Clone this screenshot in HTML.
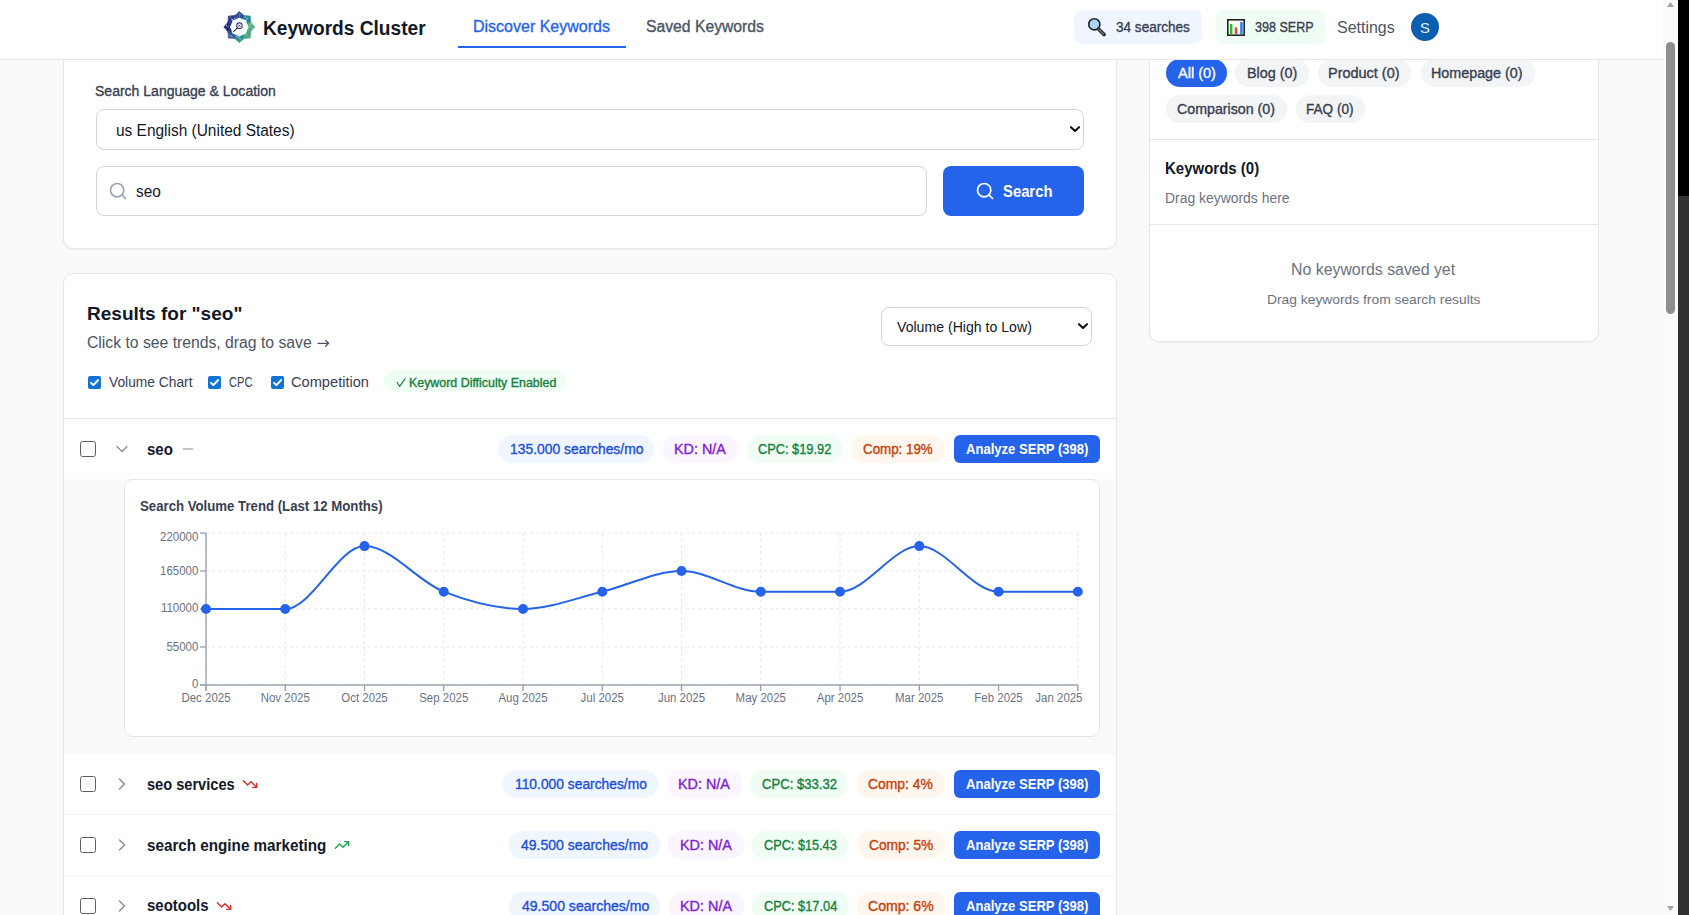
<!DOCTYPE html>
<html><head><meta charset="utf-8"><title>Keywords Cluster</title>
<style>
html,body{margin:0;padding:0}
body{width:1689px;height:915px;overflow:hidden;position:relative;background:#f9fafb;font-family:"Liberation Sans",sans-serif}
.b{position:absolute;display:block}
.t{position:absolute;white-space:nowrap;line-height:1;transform-origin:0 0}
#main{position:absolute;left:0;top:0;width:1663px;height:915px;overflow:hidden}
#hdr{position:absolute;left:0;top:0;width:1663px;height:60px}
</style></head><body>
<div id="main">
<div class="b" style="left:63px;top:-40px;width:1054px;height:289px;background:#fff;border:1px solid #e5e7eb;border-radius:10px;box-shadow:0 1px 2px rgba(0,0,0,.05);box-sizing:border-box"></div>
<div class="b" style="left:1149px;top:-40px;width:450px;height:382px;background:#fff;border:1px solid #e5e7eb;border-radius:10px;box-shadow:0 1px 2px rgba(0,0,0,.05);box-sizing:border-box"></div>
<div class="b" style="left:63px;top:273px;width:1054px;height:727px;background:#fff;border:1px solid #e5e7eb;border-radius:10px;box-shadow:0 1px 2px rgba(0,0,0,.05);box-sizing:border-box"></div>
<div class="b" style="left:96px;top:109px;width:988px;height:41px;border:1px solid #d1d5db;border-radius:8px;background:#fff;box-sizing:border-box"></div>
<svg class="b" style="left:1068px;top:122px" width="14" height="14" viewBox="0 0 14 14"><path d="M3 5.2l4 3.8 4-3.8" fill="none" stroke="#111" stroke-width="2.1" stroke-linecap="round" stroke-linejoin="round"/></svg>
<div class="b" style="left:96px;top:166px;width:831px;height:50px;border:1px solid #d1d5db;border-radius:8px;background:#fff;box-sizing:border-box"></div>
<svg class="b" style="left:108px;top:181px" width="20" height="20" viewBox="0 0 24 24" fill="none" stroke="#9ca3af" stroke-width="2" stroke-linecap="round" stroke-linejoin="round"><circle cx="11" cy="11" r="8"/><path d="m21 21-4.3-4.3"/></svg>
<div class="b" style="left:943px;top:166px;width:141px;height:50px;background:#2563eb;border-radius:8px"></div>
<svg class="b" style="left:975px;top:181px" width="20" height="20" viewBox="0 0 24 24" fill="none" stroke="#ffffff" stroke-width="2" stroke-linecap="round" stroke-linejoin="round"><circle cx="11" cy="11" r="8"/><path d="m21 21-4.3-4.3"/></svg>
<div class="b" style="left:881px;top:307px;width:211px;height:39px;border:1px solid #d1d5db;border-radius:8px;background:#fff;box-sizing:border-box"></div>
<svg class="b" style="left:1076px;top:319px" width="14" height="14" viewBox="0 0 14 14"><path d="M3 5.2l4 3.8 4-3.8" fill="none" stroke="#111" stroke-width="2.1" stroke-linecap="round" stroke-linejoin="round"/></svg>
<div class="b" style="left:88px;top:376px;width:13px;height:13px;background:#1173d4;border-radius:2px"></div>
<svg class="b" style="left:88px;top:376px" width="13" height="13" viewBox="0 0 13 13"><path d="M3 6.8l2.4 2.4L10.2 4" fill="none" stroke="#fff" stroke-width="1.9" stroke-linecap="round" stroke-linejoin="round"/></svg>
<div class="b" style="left:208px;top:376px;width:13px;height:13px;background:#1173d4;border-radius:2px"></div>
<svg class="b" style="left:208px;top:376px" width="13" height="13" viewBox="0 0 13 13"><path d="M3 6.8l2.4 2.4L10.2 4" fill="none" stroke="#fff" stroke-width="1.9" stroke-linecap="round" stroke-linejoin="round"/></svg>
<div class="b" style="left:271px;top:376px;width:13px;height:13px;background:#1173d4;border-radius:2px"></div>
<svg class="b" style="left:271px;top:376px" width="13" height="13" viewBox="0 0 13 13"><path d="M3 6.8l2.4 2.4L10.2 4" fill="none" stroke="#fff" stroke-width="1.9" stroke-linecap="round" stroke-linejoin="round"/></svg>
<div class="b" style="left:384px;top:370px;width:183px;height:22px;background:#f0fdf4;border-radius:11px"></div>
<svg class="b" style="left:396px;top:378px" width="10" height="10" viewBox="0 0 10 10"><path d="M1.2 4.3L3.6 8.4L9 0.9" fill="none" stroke="#15803d" stroke-width="1.15" stroke-linecap="round" stroke-linejoin="round"/></svg>
<div class="b" style="left:64px;top:418px;width:1052px;height:1px;background:#e5e7eb"></div>
<svg class="b" style="left:315px;top:337px" width="16" height="12" viewBox="0 0 16 12"><path d="M3 6.3H13.6M10.6 3.4L13.6 6.3L10.6 9.2" fill="none" stroke="#4b5563" stroke-width="1.3" stroke-linecap="round" stroke-linejoin="round"/></svg>
<div class="b" style="left:64px;top:479px;width:1052px;height:274px;background:#f9fafb"></div>
<div class="b" style="left:64px;top:753px;width:1052px;height:1px;background:#f3f4f6"></div>
<div class="b" style="left:64px;top:814px;width:1052px;height:1px;background:#f3f4f6"></div>
<div class="b" style="left:64px;top:875px;width:1052px;height:1px;background:#f3f4f6"></div>
<div class="b" style="left:124px;top:479px;width:976px;height:258px;background:#fff;border:1px solid #e5e7eb;border-radius:8px;box-sizing:border-box"></div>
<div class="b" style="left:80px;top:441px;width:16px;height:16px;border:1px solid #5f5f5f;border-radius:2.5px;background:#fff;box-sizing:border-box"></div>
<svg class="b" style="left:112px;top:439px" width="20" height="20" viewBox="0 0 24 24" fill="none" stroke="#8c8c8c" stroke-width="1.6" stroke-linecap="round" stroke-linejoin="round"><path d="m6 9 6 6 6-6"/></svg>
<div class="b" style="left:80px;top:776px;width:16px;height:16px;border:1px solid #5f5f5f;border-radius:2.5px;background:#fff;box-sizing:border-box"></div>
<svg class="b" style="left:112px;top:774px" width="20" height="20" viewBox="0 0 24 24" fill="none" stroke="#8c8c8c" stroke-width="1.7" stroke-linecap="round" stroke-linejoin="round"><path d="m9 18 6-6-6-6"/></svg>
<div class="b" style="left:80px;top:837px;width:16px;height:16px;border:1px solid #5f5f5f;border-radius:2.5px;background:#fff;box-sizing:border-box"></div>
<svg class="b" style="left:112px;top:835px" width="20" height="20" viewBox="0 0 24 24" fill="none" stroke="#8c8c8c" stroke-width="1.7" stroke-linecap="round" stroke-linejoin="round"><path d="m9 18 6-6-6-6"/></svg>
<div class="b" style="left:80px;top:898px;width:16px;height:16px;border:1px solid #5f5f5f;border-radius:2.5px;background:#fff;box-sizing:border-box"></div>
<svg class="b" style="left:112px;top:896px" width="20" height="20" viewBox="0 0 24 24" fill="none" stroke="#8c8c8c" stroke-width="1.7" stroke-linecap="round" stroke-linejoin="round"><path d="m9 18 6-6-6-6"/></svg>
<svg class="b" style="left:180px;top:441px" width="16" height="16" viewBox="0 0 24 24" fill="none" stroke="#b0b0b0" stroke-width="2" stroke-linecap="round" stroke-linejoin="round"><path d="M5 12h14"/></svg>
<svg class="b" style="left:242px;top:776px" width="16" height="16" viewBox="0 0 24 24" fill="none" stroke="#dc2626" stroke-width="2" stroke-linecap="round" stroke-linejoin="round"><polyline points="22 17 13.5 8.5 8.5 13.5 2 7"/><polyline points="16 17 22 17 22 11"/></svg>
<svg class="b" style="left:334px;top:837px" width="16" height="16" viewBox="0 0 24 24" fill="none" stroke="#16a34a" stroke-width="2" stroke-linecap="round" stroke-linejoin="round"><polyline points="22 7 13.5 15.5 8.5 10.5 2 17"/><polyline points="16 7 22 7 22 13"/></svg>
<svg class="b" style="left:216px;top:898px" width="16" height="16" viewBox="0 0 24 24" fill="none" stroke="#dc2626" stroke-width="2" stroke-linecap="round" stroke-linejoin="round"><polyline points="22 17 13.5 8.5 8.5 13.5 2 7"/><polyline points="16 17 22 17 22 11"/></svg>
<div class="b" style="left:498.3px;top:435px;width:156.09999999999997px;height:28px;background:#eff6ff;border-radius:14px"></div>
<div class="b" style="left:663.0px;top:435px;width:75.29999999999995px;height:28px;background:#faf5ff;border-radius:14px"></div>
<div class="b" style="left:746.5px;top:435px;width:96.70000000000005px;height:28px;background:#f0fdf4;border-radius:14px"></div>
<div class="b" style="left:851.4px;top:435px;width:93.30000000000007px;height:28px;background:#fff7ed;border-radius:14px"></div>
<div class="b" style="left:954px;top:435px;width:146px;height:28px;background:#2563eb;border-radius:6px"></div>
<div class="b" style="left:503.3px;top:770px;width:154.59999999999997px;height:28px;background:#eff6ff;border-radius:14px"></div>
<div class="b" style="left:666.5px;top:770px;width:75.29999999999995px;height:28px;background:#faf5ff;border-radius:14px"></div>
<div class="b" style="left:749.9px;top:770px;width:98.5px;height:28px;background:#f0fdf4;border-radius:14px"></div>
<div class="b" style="left:856.5px;top:770px;width:88.29999999999995px;height:28px;background:#fff7ed;border-radius:14px"></div>
<div class="b" style="left:954px;top:770px;width:146px;height:28px;background:#2563eb;border-radius:6px"></div>
<div class="b" style="left:509.1px;top:831px;width:151.0px;height:28px;background:#eff6ff;border-radius:14px"></div>
<div class="b" style="left:668.4px;top:831px;width:75.30000000000007px;height:28px;background:#faf5ff;border-radius:14px"></div>
<div class="b" style="left:752.2px;top:831px;width:96.19999999999993px;height:28px;background:#f0fdf4;border-radius:14px"></div>
<div class="b" style="left:857.1px;top:831px;width:87.69999999999993px;height:28px;background:#fff7ed;border-radius:14px"></div>
<div class="b" style="left:954px;top:831px;width:146px;height:28px;background:#2563eb;border-radius:6px"></div>
<div class="b" style="left:509.3px;top:892px;width:151.09999999999997px;height:28px;background:#eff6ff;border-radius:14px"></div>
<div class="b" style="left:668.6px;top:892px;width:75.39999999999998px;height:28px;background:#faf5ff;border-radius:14px"></div>
<div class="b" style="left:752.2px;top:892px;width:96.89999999999998px;height:28px;background:#f0fdf4;border-radius:14px"></div>
<div class="b" style="left:856.5px;top:892px;width:89.10000000000002px;height:28px;background:#fff7ed;border-radius:14px"></div>
<div class="b" style="left:954px;top:892px;width:146px;height:28px;background:#2563eb;border-radius:6px"></div>
<svg class="b" style="left:0;top:0" width="1663" height="915"><g stroke="#e5e7eb" stroke-dasharray="3 3" stroke-width="1"><line x1="206" y1="684.90" x2="1077.8" y2="684.90"/><line x1="206" y1="646.92" x2="1077.8" y2="646.92"/><line x1="206" y1="608.95" x2="1077.8" y2="608.95"/><line x1="206" y1="570.98" x2="1077.8" y2="570.98"/><line x1="206" y1="533.00" x2="1077.8" y2="533.00"/><line x1="206.00" y1="533.0" x2="206.00" y2="684.9"/><line x1="285.25" y1="533.0" x2="285.25" y2="684.9"/><line x1="364.51" y1="533.0" x2="364.51" y2="684.9"/><line x1="443.76" y1="533.0" x2="443.76" y2="684.9"/><line x1="523.02" y1="533.0" x2="523.02" y2="684.9"/><line x1="602.27" y1="533.0" x2="602.27" y2="684.9"/><line x1="681.53" y1="533.0" x2="681.53" y2="684.9"/><line x1="760.78" y1="533.0" x2="760.78" y2="684.9"/><line x1="840.04" y1="533.0" x2="840.04" y2="684.9"/><line x1="919.29" y1="533.0" x2="919.29" y2="684.9"/><line x1="1077.80" y1="533.0" x2="1077.80" y2="684.9"/></g><g stroke="#9ca3af" stroke-width="1.4"><line x1="206" y1="533" x2="206" y2="691" /><line x1="200" y1="685" x2="1077.8" y2="685"/><line x1="200" y1="684.90" x2="206" y2="684.90"/><line x1="200" y1="646.92" x2="206" y2="646.92"/><line x1="200" y1="608.95" x2="206" y2="608.95"/><line x1="200" y1="570.98" x2="206" y2="570.98"/><line x1="200" y1="533.00" x2="206" y2="533.00"/><line x1="206.00" y1="685" x2="206.00" y2="691"/><line x1="285.25" y1="685" x2="285.25" y2="691"/><line x1="364.51" y1="685" x2="364.51" y2="691"/><line x1="443.76" y1="685" x2="443.76" y2="691"/><line x1="523.02" y1="685" x2="523.02" y2="691"/><line x1="602.27" y1="685" x2="602.27" y2="691"/><line x1="681.53" y1="685" x2="681.53" y2="691"/><line x1="760.78" y1="685" x2="760.78" y2="691"/><line x1="840.04" y1="685" x2="840.04" y2="691"/><line x1="919.29" y1="685" x2="919.29" y2="691"/><line x1="998.55" y1="685" x2="998.55" y2="691"/><line x1="1077.80" y1="685" x2="1077.80" y2="691"/></g><g fill="#6b7280" font-size="12" font-family="Liberation Sans, sans-serif"><text x="198.3" y="540.8" text-anchor="end" textLength="38.23" lengthAdjust="spacingAndGlyphs">220000</text><text x="198.3" y="574.6" text-anchor="end" textLength="38.23" lengthAdjust="spacingAndGlyphs">165000</text><text x="198.3" y="612.4" text-anchor="end" textLength="37.38" lengthAdjust="spacingAndGlyphs">110000</text><text x="198.3" y="650.8" text-anchor="end" textLength="31.86" lengthAdjust="spacingAndGlyphs">55000</text><text x="198.3" y="688.4" text-anchor="end" textLength="6.37" lengthAdjust="spacingAndGlyphs">0</text><text x="206.00" y="701.7" text-anchor="middle" textLength="49.05" lengthAdjust="spacingAndGlyphs">Dec 2025</text><text x="285.25" y="701.7" text-anchor="middle" textLength="49.05" lengthAdjust="spacingAndGlyphs">Nov 2025</text><text x="364.51" y="701.7" text-anchor="middle" textLength="46.48" lengthAdjust="spacingAndGlyphs">Oct 2025</text><text x="443.76" y="701.7" text-anchor="middle" textLength="49.05" lengthAdjust="spacingAndGlyphs">Sep 2025</text><text x="523.02" y="701.7" text-anchor="middle" textLength="49.05" lengthAdjust="spacingAndGlyphs">Aug 2025</text><text x="602.27" y="701.7" text-anchor="middle" textLength="43.32" lengthAdjust="spacingAndGlyphs">Jul 2025</text><text x="681.53" y="701.7" text-anchor="middle" textLength="47.14" lengthAdjust="spacingAndGlyphs">Jun 2025</text><text x="760.78" y="701.7" text-anchor="middle" textLength="50.32" lengthAdjust="spacingAndGlyphs">May 2025</text><text x="840.04" y="701.7" text-anchor="middle" textLength="46.50" lengthAdjust="spacingAndGlyphs">Apr 2025</text><text x="919.29" y="701.7" text-anchor="middle" textLength="48.41" lengthAdjust="spacingAndGlyphs">Mar 2025</text><text x="998.55" y="701.7" text-anchor="middle" textLength="48.41" lengthAdjust="spacingAndGlyphs">Feb 2025</text><text x="1082.5" y="701.7" text-anchor="end" textLength="47.14" lengthAdjust="spacingAndGlyphs">Jan 2025</text></g><path d="M206.00,608.95C232.42,608.95,258.84,608.95,285.25,608.95C311.67,608.95,338.09,546.12,364.51,546.12C390.93,546.12,417.35,581.22,443.76,591.69C470.18,602.16,496.60,608.95,523.02,608.95C549.44,608.95,575.85,598.02,602.27,591.69C628.69,585.36,655.11,570.98,681.53,570.98C707.95,570.98,734.36,591.69,760.78,591.69C787.20,591.69,813.62,591.69,840.04,591.69C866.45,591.69,892.87,546.12,919.29,546.12C945.71,546.12,972.13,591.69,998.55,591.69C1024.96,591.69,1051.38,591.69,1077.80,591.69" fill="none" stroke="#2563eb" stroke-width="2"/><circle cx="206.00" cy="608.95" r="4" fill="#2563eb" stroke="#2563eb" stroke-width="2"/><circle cx="285.25" cy="608.95" r="4" fill="#2563eb" stroke="#2563eb" stroke-width="2"/><circle cx="364.51" cy="546.12" r="4" fill="#2563eb" stroke="#2563eb" stroke-width="2"/><circle cx="443.76" cy="591.69" r="4" fill="#2563eb" stroke="#2563eb" stroke-width="2"/><circle cx="523.02" cy="608.95" r="4" fill="#2563eb" stroke="#2563eb" stroke-width="2"/><circle cx="602.27" cy="591.69" r="4" fill="#2563eb" stroke="#2563eb" stroke-width="2"/><circle cx="681.53" cy="570.98" r="4" fill="#2563eb" stroke="#2563eb" stroke-width="2"/><circle cx="760.78" cy="591.69" r="4" fill="#2563eb" stroke="#2563eb" stroke-width="2"/><circle cx="840.04" cy="591.69" r="4" fill="#2563eb" stroke="#2563eb" stroke-width="2"/><circle cx="919.29" cy="546.12" r="4" fill="#2563eb" stroke="#2563eb" stroke-width="2"/><circle cx="998.55" cy="591.69" r="4" fill="#2563eb" stroke="#2563eb" stroke-width="2"/><circle cx="1077.80" cy="591.69" r="4" fill="#2563eb" stroke="#2563eb" stroke-width="2"/></svg>
<div class="b" style="left:1166px;top:59px;width:61px;height:28px;background:#2563eb;border-radius:14px"></div>
<div class="b" style="left:1235px;top:59px;width:74px;height:28px;background:#f3f4f6;border-radius:14px"></div>
<div class="b" style="left:1318px;top:59px;width:93px;height:28px;background:#f3f4f6;border-radius:14px"></div>
<div class="b" style="left:1421px;top:59px;width:114px;height:28px;background:#f3f4f6;border-radius:14px"></div>
<div class="b" style="left:1166px;top:95px;width:121px;height:28px;background:#f3f4f6;border-radius:14px"></div>
<div class="b" style="left:1296px;top:95px;width:69px;height:28px;background:#f3f4f6;border-radius:14px"></div>
<div class="b" style="left:1150px;top:139px;width:448px;height:1px;background:#e5e7eb"></div>
<div class="b" style="left:1150px;top:224px;width:448px;height:1px;background:#e5e7eb"></div>
<div class="t" style="left:95.30px;top:84px;font-size:14px;font-weight:400;-webkit-text-stroke:0.35px #374151;color:#374151;transform:scaleX(1.0010)">Search Language &amp; Location</div>
<div class="t" style="left:115.56px;top:123px;font-size:16px;font-weight:400;color:#111827;transform:scaleX(0.9654)">us English (United States)</div>
<div class="t" style="left:136.14px;top:184px;font-size:16px;font-weight:400;color:#111827;transform:scaleX(0.9616)">seo</div>
<div class="t" style="left:1002.77px;top:184px;font-size:16px;font-weight:700;color:#ffffff;transform:scaleX(0.9264)">Search</div>
<div class="t" style="left:87.17px;top:304px;font-size:19px;font-weight:700;color:#111827;transform:scaleX(1.0008)">Results for &quot;seo&quot;</div>
<div class="t" style="left:87.02px;top:335px;font-size:16px;font-weight:400;color:#4b5563;transform:scaleX(0.9829)">Click to see trends, drag to save</div>
<div class="t" style="left:108.68px;top:375px;font-size:14px;font-weight:400;color:#374151;transform:scaleX(0.9842)">Volume Chart</div>
<div class="t" style="left:229.11px;top:375px;font-size:14px;font-weight:400;color:#374151;transform:scaleX(0.7978)">CPC</div>
<div class="t" style="left:290.94px;top:375px;font-size:14px;font-weight:400;color:#374151;transform:scaleX(1.0442)">Competition</div>
<div class="t" style="left:409.26px;top:377px;font-size:12px;font-weight:400;-webkit-text-stroke:0.35px #15803d;color:#15803d;transform:scaleX(1.0334)">Keyword Difficulty Enabled</div>
<div class="t" style="left:897.38px;top:320px;font-size:14px;font-weight:400;color:#111827;transform:scaleX(1.0074)">Volume (High to Low)</div>
<div class="t" style="left:146.86px;top:442px;font-size:16px;font-weight:700;color:#111827;transform:scaleX(0.9396)">seo</div>
<div class="t" style="left:146.79px;top:777px;font-size:16px;font-weight:700;color:#111827;transform:scaleX(0.9118)">seo services</div>
<div class="t" style="left:146.85px;top:838px;font-size:16px;font-weight:700;color:#111827;transform:scaleX(0.9511)">search engine marketing</div>
<div class="t" style="left:146.86px;top:898px;font-size:16px;font-weight:700;color:#111827;transform:scaleX(0.9359)">seotools</div>
<div class="t" style="left:140.18px;top:499px;font-size:14px;font-weight:700;color:#374151;transform:scaleX(0.9431)">Search Volume Trend (Last 12 Months)</div>
<div class="t" style="left:1177.71px;top:66px;font-size:14px;font-weight:400;-webkit-text-stroke:0.35px #ffffff;color:#ffffff;transform:scaleX(1.0351)">All (0)</div>
<div class="t" style="left:1246.63px;top:66px;font-size:14px;font-weight:400;-webkit-text-stroke:0.35px #374151;color:#374151;transform:scaleX(1.0260)">Blog (0)</div>
<div class="t" style="left:1328.42px;top:66px;font-size:14px;font-weight:400;-webkit-text-stroke:0.35px #374151;color:#374151;transform:scaleX(1.0329)">Product (0)</div>
<div class="t" style="left:1431.33px;top:66px;font-size:14px;font-weight:400;-webkit-text-stroke:0.35px #374151;color:#374151;transform:scaleX(1.0221)">Homepage (0)</div>
<div class="t" style="left:1177.30px;top:102px;font-size:14px;font-weight:400;-webkit-text-stroke:0.35px #374151;color:#374151;transform:scaleX(1.0155)">Comparison (0)</div>
<div class="t" style="left:1306.39px;top:102px;font-size:14px;font-weight:400;-webkit-text-stroke:0.35px #374151;color:#374151;transform:scaleX(0.9709)">FAQ (0)</div>
<div class="t" style="left:1165.19px;top:161px;font-size:16px;font-weight:700;color:#111827;transform:scaleX(0.9370)">Keywords (0)</div>
<div class="t" style="left:1165.06px;top:191px;font-size:14px;font-weight:400;color:#6b7280;transform:scaleX(0.9939)">Drag keywords here</div>
<div class="t" style="left:1291.35px;top:262px;font-size:16px;font-weight:400;color:#6b7280;transform:scaleX(0.9921)">No keywords saved yet</div>
<div class="t" style="left:1266.54px;top:293px;font-size:13px;font-weight:400;color:#6b7280;transform:scaleX(1.0631)">Drag keywords from search results</div>
<div class="t" style="left:509.70px;top:442px;font-size:14px;font-weight:400;-webkit-text-stroke:0.35px #1d4ed8;color:#1d4ed8;transform:scaleX(0.9911)">135.000 searches/mo</div>
<div class="t" style="left:674.32px;top:442px;font-size:14px;font-weight:400;-webkit-text-stroke:0.35px #7e22ce;color:#7e22ce;transform:scaleX(1.0263)">KD: N/A</div>
<div class="t" style="left:758.46px;top:442px;font-size:14px;font-weight:400;-webkit-text-stroke:0.35px #15803d;color:#15803d;transform:scaleX(0.9137)">CPC: $19.92</div>
<div class="t" style="left:863.34px;top:442px;font-size:14px;font-weight:400;-webkit-text-stroke:0.35px #c2410c;color:#c2410c;transform:scaleX(0.9531)">Comp: 19%</div>
<div class="t" style="left:965.57px;top:442px;font-size:14px;font-weight:700;color:#ffffff;transform:scaleX(0.9327)">Analyze SERP (398)</div>
<div class="t" style="left:514.70px;top:777px;font-size:14px;font-weight:400;-webkit-text-stroke:0.35px #1d4ed8;color:#1d4ed8;transform:scaleX(0.9873)">110.000 searches/mo</div>
<div class="t" style="left:677.82px;top:777px;font-size:14px;font-weight:400;-webkit-text-stroke:0.35px #7e22ce;color:#7e22ce;transform:scaleX(1.0263)">KD: N/A</div>
<div class="t" style="left:761.85px;top:777px;font-size:14px;font-weight:400;-webkit-text-stroke:0.35px #15803d;color:#15803d;transform:scaleX(0.9364)">CPC: $33.32</div>
<div class="t" style="left:868.42px;top:777px;font-size:14px;font-weight:400;-webkit-text-stroke:0.35px #c2410c;color:#c2410c;transform:scaleX(0.9930)">Comp: 4%</div>
<div class="t" style="left:965.57px;top:777px;font-size:14px;font-weight:700;color:#ffffff;transform:scaleX(0.9327)">Analyze SERP (398)</div>
<div class="t" style="left:521.34px;top:838px;font-size:14px;font-weight:400;-webkit-text-stroke:0.35px #1d4ed8;color:#1d4ed8;transform:scaleX(1.0023)">49.500 searches/mo</div>
<div class="t" style="left:679.72px;top:838px;font-size:14px;font-weight:400;-webkit-text-stroke:0.35px #7e22ce;color:#7e22ce;transform:scaleX(1.0263)">KD: N/A</div>
<div class="t" style="left:764.17px;top:838px;font-size:14px;font-weight:400;-webkit-text-stroke:0.35px #15803d;color:#15803d;transform:scaleX(0.9073)">CPC: $15.43</div>
<div class="t" style="left:869.02px;top:838px;font-size:14px;font-weight:400;-webkit-text-stroke:0.35px #c2410c;color:#c2410c;transform:scaleX(0.9837)">Comp: 5%</div>
<div class="t" style="left:965.57px;top:838px;font-size:14px;font-weight:700;color:#ffffff;transform:scaleX(0.9327)">Analyze SERP (398)</div>
<div class="t" style="left:521.54px;top:899px;font-size:14px;font-weight:400;-webkit-text-stroke:0.35px #1d4ed8;color:#1d4ed8;transform:scaleX(1.0031)">49.500 searches/mo</div>
<div class="t" style="left:679.92px;top:899px;font-size:14px;font-weight:400;-webkit-text-stroke:0.35px #7e22ce;color:#7e22ce;transform:scaleX(1.0283)">KD: N/A</div>
<div class="t" style="left:764.16px;top:899px;font-size:14px;font-weight:400;-webkit-text-stroke:0.35px #15803d;color:#15803d;transform:scaleX(0.9138)">CPC: $17.04</div>
<div class="t" style="left:868.41px;top:899px;font-size:14px;font-weight:400;-webkit-text-stroke:0.35px #c2410c;color:#c2410c;transform:scaleX(1.0055)">Comp: 6%</div>
<div class="t" style="left:965.57px;top:899px;font-size:14px;font-weight:700;color:#ffffff;transform:scaleX(0.9327)">Analyze SERP (398)</div>
<div id="hdr">
<div class="b" style="left:0px;top:0px;width:1663px;height:60px;background:#fff;border-bottom:1px solid #e5e7eb;box-sizing:border-box"></div>
<div class="b" style="left:458px;top:46px;width:168px;height:2px;background:#2563eb"></div>
<div class="b" style="left:1074px;top:10px;width:128px;height:34px;background:#eff6ff;border-radius:8px"></div>
<div class="b" style="left:1216px;top:10px;width:109px;height:34px;background:#f0fdf4;border-radius:8px"></div>
<div class="b" style="left:1411px;top:13px;width:28px;height:28px;background:#0b5fae;border-radius:50%"></div>
<svg class="b" style="left:1087px;top:17px" width="20" height="20" viewBox="0 0 20 20"><line x1="10.5" y1="11" x2="17" y2="17.5" stroke="#222" stroke-width="3.6" stroke-linecap="round"/><line x1="11" y1="11.5" x2="16.5" y2="17" stroke="#777" stroke-width="1.6" stroke-linecap="round"/><circle cx="7.3" cy="7.3" r="5.6" fill="#a9d4f5" stroke="#222" stroke-width="1.6"/></svg>
<svg class="b" style="left:1227px;top:19px" width="18" height="17" viewBox="0 0 18 17"><rect x="0.8" y="0.8" width="16.4" height="15.4" fill="#fff" stroke="#222" stroke-width="1.6"/><rect x="2.9" y="5" width="2.5" height="10" fill="#2fb52f"/><rect x="7.8" y="8.4" width="2.5" height="6.6" fill="#e0453a"/><rect x="13.2" y="3" width="2.5" height="12" fill="#2a7fd6"/></svg>
<svg class="b" style="left:0;top:0" width="300" height="60"><polygon points="239.30,27.00 239.30,11.60 244.05,15.54" fill="#2f5192" stroke="#2f5192" stroke-width="0.6" stroke-linejoin="round"/><polygon points="239.30,27.00 244.05,15.54 250.19,16.11" fill="#2a8596" stroke="#2a8596" stroke-width="0.6" stroke-linejoin="round"/><polygon points="239.30,27.00 250.19,16.11 250.76,22.25" fill="#2a8596" stroke="#2a8596" stroke-width="0.6" stroke-linejoin="round"/><polygon points="239.30,27.00 250.76,22.25 254.70,27.00" fill="#52b088" stroke="#52b088" stroke-width="0.6" stroke-linejoin="round"/><polygon points="239.30,27.00 254.70,27.00 250.76,31.75" fill="#52b088" stroke="#52b088" stroke-width="0.6" stroke-linejoin="round"/><polygon points="239.30,27.00 250.76,31.75 250.19,37.89" fill="#4aa685" stroke="#4aa685" stroke-width="0.6" stroke-linejoin="round"/><polygon points="239.30,27.00 250.19,37.89 244.05,38.46" fill="#4aa685" stroke="#4aa685" stroke-width="0.6" stroke-linejoin="round"/><polygon points="239.30,27.00 244.05,38.46 239.30,42.40" fill="#2f9199" stroke="#2f9199" stroke-width="0.6" stroke-linejoin="round"/><polygon points="239.30,27.00 239.30,42.40 234.55,38.46" fill="#2f9199" stroke="#2f9199" stroke-width="0.6" stroke-linejoin="round"/><polygon points="239.30,27.00 234.55,38.46 228.41,37.89" fill="#31579a" stroke="#31579a" stroke-width="0.6" stroke-linejoin="round"/><polygon points="239.30,27.00 228.41,37.89 227.84,31.75" fill="#31579a" stroke="#31579a" stroke-width="0.6" stroke-linejoin="round"/><polygon points="239.30,27.00 227.84,31.75 223.90,27.00" fill="#23307f" stroke="#23307f" stroke-width="0.6" stroke-linejoin="round"/><polygon points="239.30,27.00 223.90,27.00 227.84,22.25" fill="#23307f" stroke="#23307f" stroke-width="0.6" stroke-linejoin="round"/><polygon points="239.30,27.00 227.84,22.25 228.41,16.11" fill="#283a86" stroke="#283a86" stroke-width="0.6" stroke-linejoin="round"/><polygon points="239.30,27.00 228.41,16.11 234.55,15.54" fill="#283a86" stroke="#283a86" stroke-width="0.6" stroke-linejoin="round"/><polygon points="239.30,27.00 234.55,15.54 239.30,11.60" fill="#2f5192" stroke="#2f5192" stroke-width="0.6" stroke-linejoin="round"/><circle cx="240.20" cy="38.91" r="0.55" fill="#dff3ff" opacity="0.8"/><circle cx="230.94" cy="35.91" r="0.55" fill="#dff3ff" opacity="0.8"/><circle cx="232.41" cy="20.04" r="0.55" fill="#dff3ff" opacity="0.8"/><circle cx="252.52" cy="28.10" r="0.55" fill="#dff3ff" opacity="0.8"/><circle cx="238.68" cy="37.54" r="0.55" fill="#dff3ff" opacity="0.8"/><circle cx="250.91" cy="26.68" r="0.55" fill="#dff3ff" opacity="0.8"/><circle cx="245.32" cy="17.03" r="0.55" fill="#dff3ff" opacity="0.8"/><circle cx="232.77" cy="19.20" r="0.55" fill="#dff3ff" opacity="0.8"/><circle cx="230.43" cy="16.95" r="0.55" fill="#dff3ff" opacity="0.8"/><circle cx="226.60" cy="25.14" r="0.55" fill="#dff3ff" opacity="0.8"/><circle cx="234.66" cy="18.38" r="0.55" fill="#dff3ff" opacity="0.8"/><circle cx="239.93" cy="14.86" r="0.55" fill="#dff3ff" opacity="0.8"/><circle cx="236.25" cy="36.14" r="0.55" fill="#dff3ff" opacity="0.8"/><circle cx="247.02" cy="18.30" r="0.55" fill="#dff3ff" opacity="0.8"/><circle cx="236.68" cy="13.80" r="0.55" fill="#dff3ff" opacity="0.8"/><circle cx="236.25" cy="13.70" r="0.55" fill="#dff3ff" opacity="0.8"/><circle cx="228.95" cy="35.03" r="0.55" fill="#dff3ff" opacity="0.8"/><circle cx="226.41" cy="31.67" r="0.55" fill="#dff3ff" opacity="0.8"/><circle cx="246.50" cy="20.15" r="0.55" fill="#dff3ff" opacity="0.8"/><circle cx="246.18" cy="34.90" r="0.55" fill="#dff3ff" opacity="0.8"/><circle cx="250.49" cy="24.53" r="0.55" fill="#dff3ff" opacity="0.8"/><circle cx="231.70" cy="19.25" r="0.55" fill="#dff3ff" opacity="0.8"/><circle cx="228.08" cy="26.49" r="0.55" fill="#dff3ff" opacity="0.8"/><circle cx="232.11" cy="36.77" r="0.55" fill="#dff3ff" opacity="0.8"/><circle cx="227.59" cy="20.15" r="0.55" fill="#dff3ff" opacity="0.8"/><circle cx="233.63" cy="14.55" r="0.55" fill="#dff3ff" opacity="0.8"/><polygon points="239.30,17.60 242.51,19.24 245.95,20.35 247.06,23.79 248.70,27.00 247.06,30.21 245.95,33.65 242.51,34.76 239.30,36.40 236.09,34.76 232.65,33.65 231.54,30.21 229.90,27.00 231.54,23.79 232.65,20.35 236.09,19.24" fill="#fff"/><circle cx="239.4" cy="25.7" r="2.8" fill="none" stroke="#3d3f6b" stroke-width="1.1"/><path d="M238.3 24.6l2.2 2.2M240.5 24.6l-2.2 2.2" stroke="#3d3f6b" stroke-width="0.9"/><line x1="237.4" y1="27.8" x2="233.6" y2="31.6" stroke="#3d3f6b" stroke-width="1.2" stroke-linecap="round"/></svg>
<div class="t" style="left:263.27px;top:18px;font-size:20px;font-weight:700;color:#111827;transform:scaleX(0.9561)">Keywords Cluster</div>
<div class="t" style="left:473.48px;top:19px;font-size:16px;font-weight:400;-webkit-text-stroke:0.35px #2563eb;color:#2563eb;transform:scaleX(0.9999)">Discover Keywords</div>
<div class="t" style="left:646.01px;top:19px;font-size:16px;font-weight:400;-webkit-text-stroke:0.35px #4b5563;color:#4b5563;transform:scaleX(0.9820)">Saved Keywords</div>
<div class="t" style="left:1116.37px;top:20px;font-size:14px;font-weight:400;-webkit-text-stroke:0.35px #374151;color:#374151;transform:scaleX(0.9686)">34 searches</div>
<div class="t" style="left:1255.20px;top:20px;font-size:14px;font-weight:400;-webkit-text-stroke:0.35px #374151;color:#374151;transform:scaleX(0.8959)">398 SERP</div>
<div class="t" style="left:1337.38px;top:20px;font-size:16px;font-weight:400;color:#4b5563;transform:scaleX(0.9986)">Settings</div>
<div class="t" style="left:1419.72px;top:20px;font-size:15px;font-weight:400;color:#e0f0ff;transform:scaleX(0.9884)">S</div>
</div>
</div>
<div class="b" style="left:1663px;top:0px;width:15px;height:915px;background:#fbfbfb"></div>
<div class="b" style="left:1666px;top:42px;width:9px;height:272px;background:#8f8f8f;border-radius:4.5px"></div>
<svg class="b" style="left:1663px;top:0" width="15" height="915"><polygon points="4,7 7.5,2 11,7" fill="#a3a3a3"/><polygon points="4,906 7.5,911 11,906" fill="#a3a3a3"/></svg>
<div class="b" style="left:1678px;top:0px;width:11px;height:196px;background:#000"></div>
<div class="b" style="left:1678px;top:196px;width:11px;height:719px;background:#323232"></div>
</body></html>
